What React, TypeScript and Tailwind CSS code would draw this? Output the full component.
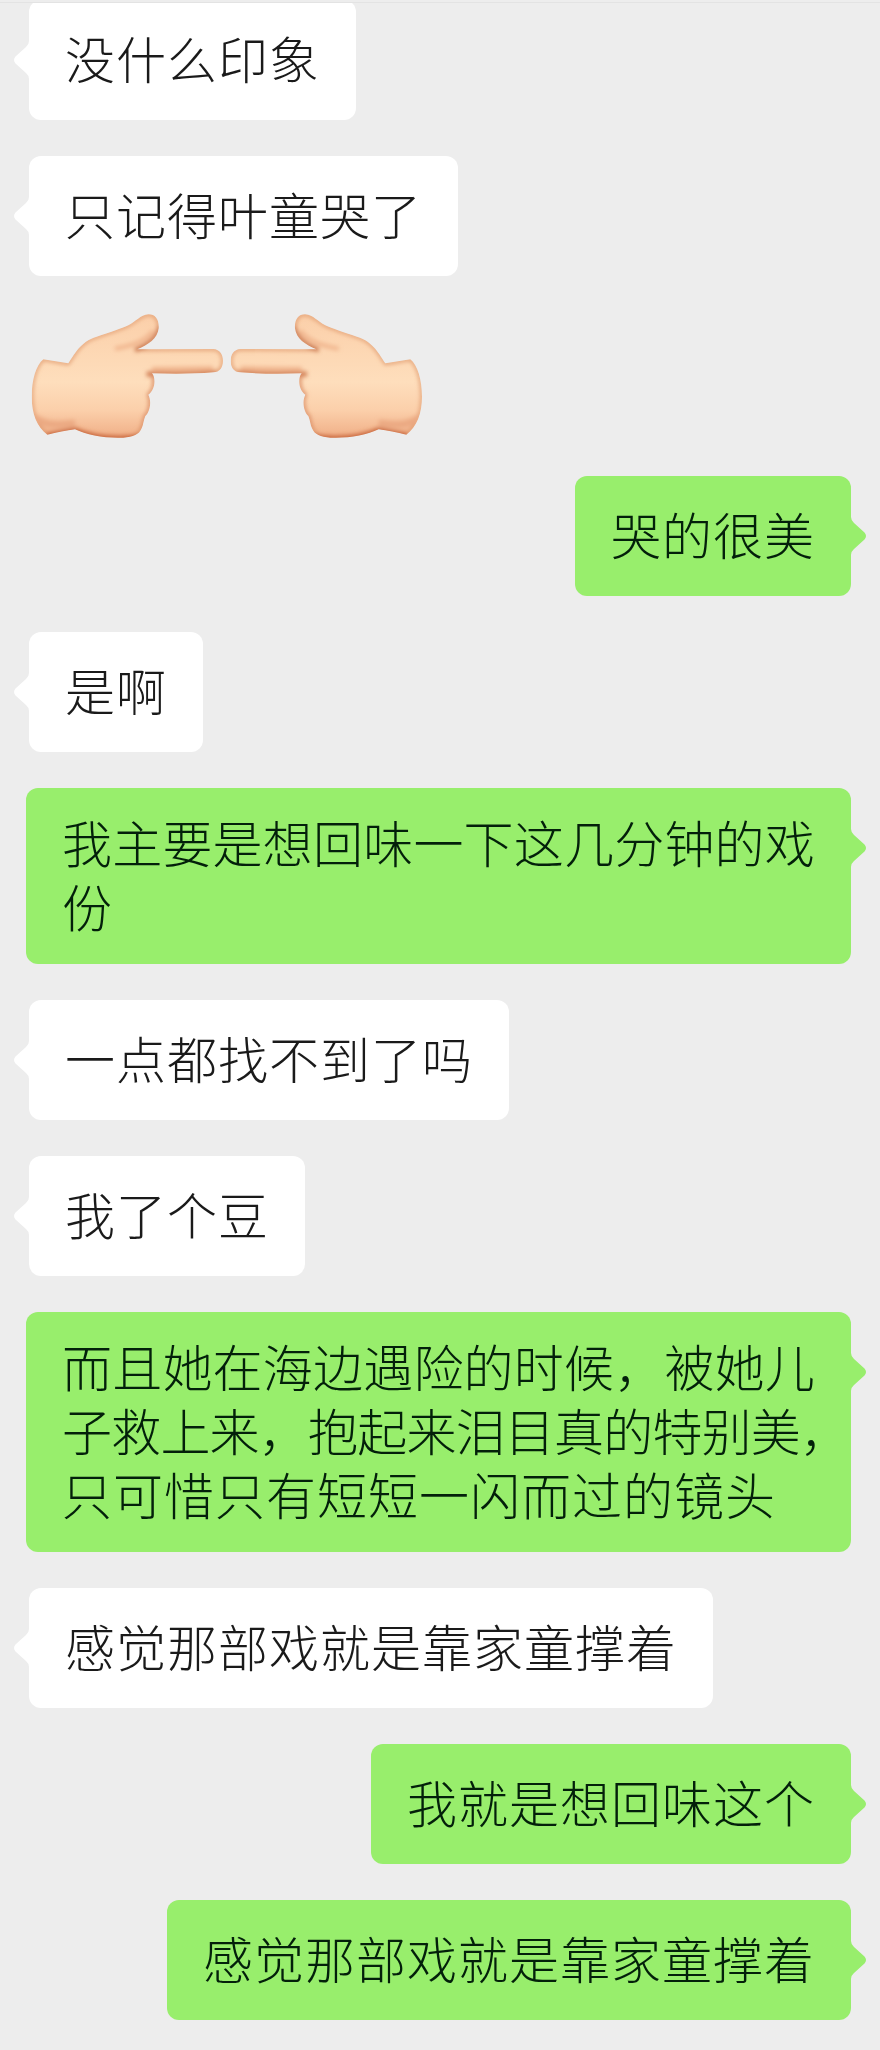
type Side = 'left' | 'right';

type Line = {
    text: string;
    tracking?: string;
};

type Message = {
    id: number;
    side: Side;
    lines?: Line[];
};

const messages: Message[] = [
    { id: 1, side: 'left', lines: [{ text: '没什么印象' }] },
    { id: 2, side: 'left', lines: [{ text: '只记得叶童哭了' }] },
    // no lines: the pointing hands sticker
    { id: 3, side: 'left' },
    { id: 4, side: 'right', lines: [{ text: '哭的很美' }] },
    { id: 5, side: 'left', lines: [{ text: '是啊' }] },
    {
        id: 6,
        side: 'right',
        lines: [
            { text: '我主要是想回味一下这几分钟的戏', tracking: 'tracking-[0.2px]' },
            { text: '份' },
        ],
    },
    { id: 7, side: 'left', lines: [{ text: '一点都找不到了吗' }] },
    { id: 8, side: 'left', lines: [{ text: '我了个豆' }] },
    {
        id: 9,
        side: 'right',
        lines: [
            { text: '而且她在海边遇险的时候，被她儿', tracking: 'tracking-[0.2px]' },
            { text: '子救上来，抱起来泪目真的特别美，', tracking: 'tracking-[-0.8px]' },
            { text: '只可惜只有短短一闪而过的镜头' },
        ],
    },
    { id: 10, side: 'left', lines: [{ text: '感觉那部戏就是靠家童撑着' }] },
    { id: 11, side: 'right', lines: [{ text: '我就是想回味这个' }] },
    { id: 12, side: 'right', lines: [{ text: '感觉那部戏就是靠家童撑着' }] },
];

const HAND =
    'M130 208 C155 211 180 217 205 220 C222 195 240 155 290 140 C330 127 365 115 385 106 C408 94 420 76 445 73 C465 72 478 88 476 115 C473 145 445 165 412 178 L640 177 C660 178 669 195 669 212 C669 232 660 246 640 247 C580 252 520 252 456 250 C468 264 466 300 445 314 C456 335 449 368 436 378 C430 392 430 405 425 415 C417 435 400 440 370 443 C320 446 260 435 225 418 C200 421 170 428 142 434 C110 410 95 370 95 320 C95 270 108 225 130 208 Z';

export default function App() {
    return (
        <main className="relative h-[2050px] w-[880px] overflow-hidden bg-[#ededed]">
            <div className="flex flex-col gap-9">
                {messages.map((m) => (m.lines ? <Bubble key={m.id} side={m.side} lines={m.lines} /> : <Hands key={m.id} />))}
            </div>
            <div className="absolute inset-x-0 top-0 h-[3px] border-b border-[#e3e3e3] bg-[#ededed]" />
        </main>
    );
}

function Bubble({ side, lines }: { side: Side; lines: Line[] }) {
    const mine = side === 'right';
    return (
        <div className={mine ? 'flex justify-end pr-[29px]' : 'flex justify-start pl-[29px]'}>
            <div
                className={`relative flex min-h-[120px] max-w-[825px] flex-col justify-center rounded-xl px-9 pt-[21px] pb-[27px] font-['Noto_Sans_CJK_SC',sans-serif] text-[50px] leading-[64px] font-light ${mine ? 'bg-[#98ee6c] text-[#03200a]' : 'bg-white text-[#1a1a1a]'}`}
            >
                {lines.map((line) => (
                    <p key={line.text} className={`whitespace-nowrap ${line.tracking ?? 'tracking-[1px]'}`}>
                        {line.text}
                    </p>
                ))}
                <Tail mine={mine} />
            </div>
        </div>
    );
}

function Tail({ mine }: { mine: boolean }) {
    return (
        <svg
            viewBox="0 0 16 38"
            className={`absolute top-[41px] h-[38px] w-4 ${mine ? '-right-[15px] fill-[#98ee6c]' : '-left-[15px] -scale-x-100 fill-white'}`}
        >
            <path d="M0 0 H1 Q1 3.5 4 6 L14.5 15.5 Q17.5 19 14.5 22.5 L4 32 Q1 34.5 1 38 H0 Z" />
        </svg>
    );
}

function Hands() {
    return (
        <svg viewBox="0 66 1320 384" className="h-32 w-[440px]">
            <defs>
                <linearGradient id="skin" x1="0" y1="0" x2="0" y2="1">
                    <stop offset="0" stopColor="#fbcfa9" />
                    <stop offset="0.55" stopColor="#fedebc" />
                    <stop offset="0.78" stopColor="#fbcfaa" />
                    <stop offset="1" stopColor="#f0ae86" />
                </linearGradient>
                <clipPath id="handClip">
                    <path d={HAND} />
                </clipPath>
                <filter id="soft" x="-20%" y="-20%" width="140%" height="140%">
                    <feGaussianBlur stdDeviation="7" />
                </filter>
            </defs>
            <Hand />
            <g transform="translate(1361 0) scale(-1 1)">
                <Hand />
            </g>
        </svg>
    );
}

function Hand() {
    return (
        <g clipPath="url(#handClip)">
            <path d={HAND} fill="url(#skin)" />
            <g filter="url(#soft)" fill="none">
                <path d={HAND} stroke="#dd9468" strokeWidth="8" />
                {/* underside of the index finger */}
                <path d="M650 250 C580 254 520 254 440 252" stroke="#cf7a50" strokeWidth="15" />
                <path d="M640 236 L455 238" stroke="#efb48c" strokeWidth="14" />
                {/* thumb */}
                <path d="M405 181 C445 165 473 145 480 110" stroke="#c9754c" strokeWidth="13" />
                <path d="M345 176 C400 168 440 150 460 122" stroke="#f0b48c" strokeWidth="12" />
                {/* wrist and heel of the palm */}
                <path d="M425 444 C340 454 270 444 225 424 L140 440" stroke="#c9683c" strokeWidth="22" />
                <path d="M105 385 C150 412 180 405 225 400" stroke="#eba982" strokeWidth="22" />
                <path d="M458 250 C466 270 464 300 447 314 C456 335 449 368 436 378 C430 400 430 410 425 420" stroke="#d98a62" strokeWidth="10" />
            </g>
        </g>
    );
}
